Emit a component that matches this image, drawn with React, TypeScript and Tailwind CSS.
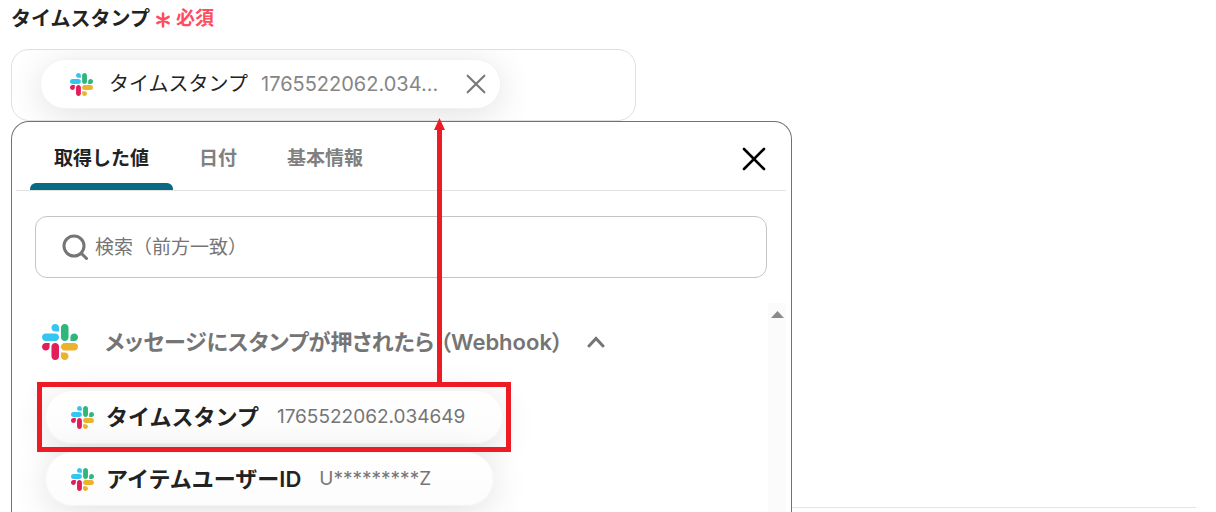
import { useState } from "react";

const SlackLogo: React.FC<{ className?: string }> = ({ className }) => (
  <svg viewBox="0 0 122.8 122.8" className={className} aria-hidden="true">
    <g fill="#e01e5a">
      <path d="M25.8 77.6c0 7.1-5.8 12.9-12.9 12.9S0 84.7 0 77.6s5.8-12.9 12.9-12.9h12.9v12.9z" />
      <path d="M32.3 77.6c0-7.1 5.8-12.9 12.9-12.9s12.9 5.8 12.9 12.9v32.3c0 7.1-5.8 12.9-12.9 12.9s-12.9-5.8-12.9-12.9V77.6z" />
    </g>
    <g fill="#36c5f0">
      <path d="M45.2 25.8c-7.1 0-12.9-5.8-12.9-12.9S38.1 0 45.2 0s12.9 5.8 12.9 12.9v12.9H45.2z" />
      <path d="M45.2 32.3c7.1 0 12.9 5.8 12.9 12.9s-5.8 12.9-12.9 12.9H12.9C5.8 58.1 0 52.3 0 45.2s5.8-12.9 12.9-12.9h32.3z" />
    </g>
    <g fill="#2eb67d">
      <path d="M97 45.2c0-7.1 5.8-12.9 12.9-12.9s12.9 5.8 12.9 12.9-5.8 12.9-12.9 12.9H97V45.2z" />
      <path d="M90.5 45.2c0 7.1-5.8 12.9-12.9 12.9s-12.9-5.8-12.9-12.9V12.9C64.7 5.8 70.5 0 77.6 0s12.9 5.8 12.9 12.9v32.3z" />
    </g>
    <g fill="#ecb22e">
      <path d="M77.6 97c7.1 0 12.9 5.8 12.9 12.9s-5.8 12.9-12.9 12.9-12.9-5.8-12.9-12.9V97h12.9z" />
      <path d="M77.6 90.5c-7.1 0-12.9-5.8-12.9-12.9s5.8-12.9 12.9-12.9h32.3c7.1 0 12.9 5.8 12.9 12.9s-5.8 12.9-12.9 12.9H77.6z" />
    </g>
  </svg>
);

const CrossIcon: React.FC<{ className?: string; width: number }> = ({
  className,
  width,
}) => (
  <svg
    viewBox="0 0 24 24"
    className={className}
    fill="none"
    stroke="currentColor"
    strokeWidth={width}
    strokeLinecap="round"
    aria-hidden="true"
  >
    <path d="M2 2l20 20M22 2L2 22" />
  </svg>
);

const tabs = ["取得した値", "日付", "基本情報"];

const values = [
  { name: "タイムスタンプ", value: "1765522062.034649", marked: true },
  { name: "アイテムユーザーID", value: "U*********Z", marked: false },
];

// red frame around a value with an arrow up to the input field
const Marker: React.FC = () => (
  <div className="pointer-events-none absolute -inset-2 z-10 border-5 border-[#ed1c24]">
    <svg
      viewBox="0 0 11 269"
      className="absolute right-[61px] bottom-full h-[269px] w-[11px]"
      fill="#ed1c24"
      aria-hidden="true"
    >
      <path d="M5.500 0L11 12H8v257H3V12H0z" />
    </svg>
  </div>
);

const App: React.FC = () => {
  const [activeTab, setActiveTab] = useState(tabs[0]);
  const [search, setSearch] = useState("");

  return (
    <div className="flex h-screen flex-col overflow-hidden bg-white pl-[11px] font-[Inter,'Noto_Sans_CJK_JP',sans-serif] text-[#222]">
      <div className="flex h-[49px] shrink-0 items-start gap-[5px] pt-[5px] leading-7">
        <span className="text-xl font-semibold">タイムスタンプ</span>
        <span className="flex items-center gap-[5px] text-[19px] font-semibold text-[#ff4d5e]">
          <svg
            viewBox="0 0 16 16"
            className="mt-0.5 size-4"
            stroke="currentColor"
            strokeWidth="2.6"
            strokeLinecap="round"
            aria-hidden="true"
          >
            <path d="M8 1.5v13M2.4 4.8l11.2 6.4M13.6 4.8L2.4 11.2" />
          </svg>
          必須
        </span>
      </div>

      <div className="flex w-[625px] max-w-full shrink-0 overflow-hidden rounded-[18px] border border-[#dedfe1] px-7 pt-[9px] pb-[11px]">
        <div className="flex h-[50px] items-center rounded-full border border-[#f2f2f2] bg-white pr-2.5 pl-[29px] shadow-[0_6px_36px_rgba(0,0,0,0.12)]">
          <SlackLogo className="size-[23px]" />
          <span className="ml-4 text-xl">タイムスタンプ</span>
          <span className="ml-[13px] text-xl text-[#868686]">1765522062.034...</span>
          <button type="button" aria-label="削除" className="ml-6 p-1">
            <CrossIcon className="size-5 text-[#77797b]" width={2.6} />
          </button>
        </div>
      </div>

      <div className="flex min-h-0 flex-1">
        <div className="flex w-[781px] max-w-full flex-col rounded-t-[18px] border border-b-0 border-[#6f7275] pr-[5px] pl-1">
          <div className="flex h-[69px] shrink-0 items-stretch justify-between border-b border-[#e2e2e2] pr-5 pl-[14px]">
            <div role="tablist" className="flex gap-0.5">
              {tabs.map((tab) => (
                <button
                  key={tab}
                  type="button"
                  role="tab"
                  aria-selected={tab === activeTab}
                  onClick={() => setActiveTab(tab)}
                  className={
                    tab === activeTab
                      ? "relative px-6 pt-1.5 text-[19px] font-semibold text-[#222]"
                      : "relative px-6 pt-1.5 text-[19px] font-semibold text-[#808080]"
                  }
                >
                  {tab}
                  {tab === activeTab && (
                    <span className="absolute inset-x-0 bottom-0 h-[7px] rounded-t-md bg-[#086a83]" />
                  )}
                </button>
              ))}
            </div>
            <button type="button" aria-label="閉じる" className="mt-1.5">
              <CrossIcon className="size-6 text-black" width={2.6} />
            </button>
          </div>

          <label className="mx-[19px] mt-[25px] flex h-[62px] shrink-0 items-center gap-[7px] rounded-xl border border-[#c4c4c4] px-[26px]">
            <svg
              viewBox="0 0 26 26"
              className="size-[26px] text-[#757575]"
              fill="none"
              stroke="currentColor"
              strokeWidth="3"
              strokeLinecap="round"
              aria-hidden="true"
            >
              <circle cx="12" cy="12" r="10" />
              <path d="M19.5 19.5l5 5" />
            </svg>
            <input
              type="text"
              aria-label="検索"
              value={search}
              onChange={(e) => setSearch(e.target.value)}
              placeholder="検索（前方一致）"
              className="min-w-0 flex-1 pt-0.5 text-[19px] outline-none placeholder:text-[#757575]"
            />
          </label>

          <div className="mt-[25px] flex min-h-0 flex-1">
            <div className="min-w-0 flex-1 pt-[21px] pl-[26px]">
              <button
                type="button"
                aria-expanded="true"
                className="flex items-center text-[22px] font-semibold text-[#757575]"
              >
                <SlackLogo className="size-9" />
                <span className="ml-[27px] flex gap-1.5 [font-feature-settings:'palt']">
                  <span>メッセージにスタンプが押されたら</span>
                  <span>（Webhook）</span>
                </span>
                <svg
                  viewBox="0 0 18 12"
                  className="ml-6 h-3 w-[18px]"
                  fill="none"
                  stroke="currentColor"
                  strokeWidth="3"
                  strokeLinecap="round"
                  aria-hidden="true"
                >
                  <path d="M2 10l7-7.500 7 7.500" />
                </svg>
              </button>

              <ul className="mt-[30px] ml-[3px] flex flex-col items-start gap-2">
                {values.map((item) => (
                  <li key={item.name} className="relative">
                    <button
                      type="button"
                      className="flex h-[54px] min-w-[449px] items-center rounded-full border border-[#f4f4f4] bg-linear-to-b from-white to-[#fcfcfc] pr-[37px] pl-[25px] shadow-[0_6px_36px_rgba(0,0,0,0.12)]"
                    >
                      <SlackLogo className="size-[23px]" />
                      <span className="ml-3 text-[22px] font-semibold">
                        {item.name}
                      </span>
                      <span className="ml-[18px] text-[19px] text-[#757575]">
                        {item.value}
                      </span>
                    </button>
                    {item.marked && <Marker />}
                  </li>
                ))}
              </ul>
            </div>

            <div className="flex w-[18px] justify-center bg-[#fbfbfb] pt-2">
              <svg viewBox="0 0 13 7" className="h-[7px] w-[13px]" aria-hidden="true">
                <path d="M6.500 0L13 7H0z" fill="#8a8a8a" />
              </svg>
            </div>
          </div>
        </div>
        <div className="mr-5 mb-1 flex-1 self-end border-b border-[#e5e5e5]" />
      </div>
    </div>
  );
};

export default App;
